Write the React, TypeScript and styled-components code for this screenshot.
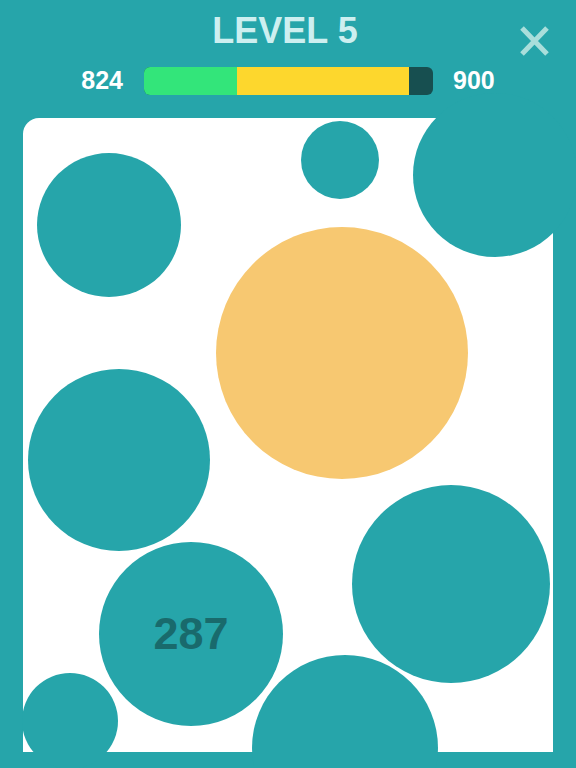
import React from "react";
import styled, { createGlobalStyle } from "styled-components";

const GlobalStyle = createGlobalStyle`
  html, body {
    margin: 0;
    padding: 0;
    background: #26a5aa;
  }
  body {
    font-family: "Liberation Sans", Arial, sans-serif;
  }
`;

const Screen = styled.div`
  width: 576px;
  height: 768px;
  display: flex;
  flex-direction: column;
  background: #26a5aa;
  overflow: hidden;
  position: relative;
`;

const Header = styled.div`
  display: flex;
  flex-direction: column;
  align-items: center;
  padding-top: 13px;
  height: 105px;
  box-sizing: border-box;
`;

const Title = styled.h1`
  margin: 0 0 0 -6px;
  font-size: 36px;
  line-height: 36px;
  font-weight: 700;
  color: #cdeff0;
`;

const CloseButton = styled.button`
  position: absolute;
  top: 26px;
  left: 519px;
  width: 31px;
  height: 30px;
  padding: 0;
  border: none;
  background: transparent;
  cursor: pointer;
`;

const ScoreRow = styled.div`
  margin-top: 17px;
  display: flex;
  align-items: center;
`;

const Score = styled.span<{ $align: "left" | "right" }>`
  width: 45px;
  font-size: 25px;
  font-weight: 700;
  color: #ffffff;
  text-align: ${(p) => p.$align};
  padding: ${(p) => (p.$align === "right" ? "0 21px 0 0" : "0 0 0 20px")};
`;

const Bar = styled.div`
  width: 289px;
  height: 28px;
  border-radius: 6px;
  overflow: hidden;
  display: flex;
  background: #174f50;
`;

const Segment = styled.div<{ $color: string }>`
  height: 100%;
  background: ${(p) => p.$color};
`;

const Board = styled.div`
  position: relative;
  flex: 1;
  margin: 13px 23px 16px;
  background: #ffffff;
  border-radius: 16px 0 0 0;
`;

const Bubble = styled.div<{ $x: number; $y: number; $size: number; $color?: string }>`
  position: absolute;
  left: ${(p) => p.$x}px;
  top: ${(p) => p.$y}px;
  width: ${(p) => p.$size}px;
  height: ${(p) => p.$size}px;
  border-radius: 50%;
  background: ${(p) => p.$color || "#26a5aa"};
  display: flex;
  align-items: center;
  justify-content: center;
`;

const BubbleValue = styled.span`
  font-size: 45px;
  font-weight: 700;
  color: #196a6c;
`;

const bubbles = [
  { x: 14, y: 35, size: 144 },
  { x: 278, y: 3, size: 78 },
  { x: 390, y: -25, size: 164 },
  { x: 193, y: 109, size: 252, color: "#f7c871" },
  { x: 5, y: 251, size: 182 },
  { x: 329, y: 367, size: 198 },
  { x: 76, y: 424, size: 184, value: 287 },
  { x: 229, y: 537, size: 186 },
  { x: -1, y: 555, size: 96 },
];

const App = () => {
  const min = 824;
  const max = 900;
  return (
    <Screen>
      <GlobalStyle />
      <Header>
        <Title>LEVEL 5</Title>
        <ScoreRow>
          <Score $align="right">{min}</Score>
          <Bar>
            <Segment $color="#33e57a" style={{ width: 93 }} />
            <Segment $color="#fdd72d" style={{ width: 172 }} />
          </Bar>
          <Score $align="left">{max}</Score>
        </ScoreRow>
      </Header>
      <CloseButton aria-label="Close">
        <svg width="31" height="30" viewBox="0 0 31 30">
          <path d="M3 2 L28 28 M28 2 L3 28" stroke="#a9dedb" strokeWidth="5" />
        </svg>
      </CloseButton>
      <Board>
        {bubbles.map((b, i) => (
          <Bubble key={i} $x={b.x} $y={b.y} $size={b.size} $color={b.color}>
            {b.value && <BubbleValue>{b.value}</BubbleValue>}
          </Bubble>
        ))}
      </Board>
    </Screen>
  );
};

export default App;
